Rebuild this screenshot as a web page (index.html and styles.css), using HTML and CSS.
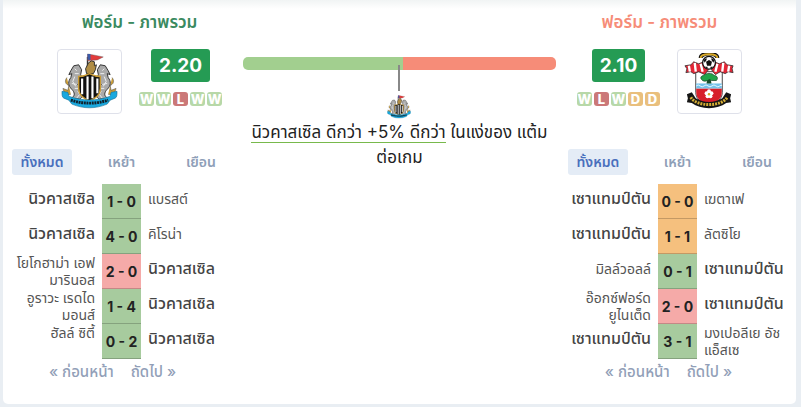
FILE: index.html
```html
<!DOCTYPE html>
<html lang="th">
<head>
<meta charset="utf-8">
<meta name="viewport" content="width=device-width, initial-scale=1">
<title>ฟอร์ม - ภาพรวม</title>
<link rel="stylesheet" href="styles.css">
</head>
<body>
<svg class="defs" aria-hidden="true">
  <symbol id="newcastle" viewBox="0 0 58 58">
    <path d="M27 4v17" stroke="#333" stroke-width="1.5"/>
    <path d="M27 1l6 1 10 2-6 3-10 1z" fill="#e23c3c" stroke="#555" stroke-width=".4"/>
    <path d="M27 1h3v6h-3z" fill="#3a5ba8"/>
    <path d="M28 10l3-2 3 1v4l2-1-1 5-2 4h-7l-1-5z" fill="#b08d45" stroke="#333"/>
    <path d="M6 25c-3 4-1 7 2 8l-1 5-5-2c1 5 4 7 8 6M52 25c3 4 1 7-2 8l1 5 5-2c-1 5-4 7-8 6" fill="#c99b35" stroke="#555" stroke-width=".6"/>
    <g id="horse" fill="#aaa" stroke="#333" stroke-width="1">
      <path d="M10 18l3-5 5-1 3 5-1 5 2 5 2 3-4-1-3 3 5 5c2 4 0 8-3 10l-9-1c5-2 4-6 1-9-4-4-4-8-1-12l1-4-3 1z"/>
      <path d="M14 16l2 2M14 24l-2 5 3 5M17 39l2 3-3 4M14 21h4M11 31l5 1M14 36l4 0" fill="none" stroke="#eee"/>
    </g>
    <use href="#horse" transform="translate(58 0) scale(-1 1)"/>
    <path d="M18 24c4 0 7-1 11-3 4 2 7 3 11 3v12c0 7-5 10-11 13-6-3-11-6-11-13z" fill="#111" stroke="#c99b35" stroke-width="1.5"/>
    <path d="M21.500 26v16M27 24v23M32 24v22M37 26v15" stroke="#fff" stroke-width="2.200"/>
    <path d="M1 39l6 1 1 4c13 5 29 5 42 0l1-4 6-1c0 4 0 6-2 7l-5 2-3 4c-12 5-24 5-36 0l-3-4-5-2c-2-1-2-3-2-7z" fill="#19a9df" stroke="#146d91" stroke-width=".6"/>
    <path d="M10 48c13 4 25 4 38 0" fill="none" stroke="#10222c" stroke-width="3" stroke-dasharray="2 .7"/>
  </symbol>
  <symbol id="southampton" viewBox="0 0 58 58">
    <path d="M15 19h27v21c0 7-5 10-13.500 14-8.500-4-13.500-7-13.500-14z" fill="#fff" stroke="#444" stroke-width="1"/>
    <path d="M15.500 36h26v4c0 7-5 10-13 14-8-4-13-7-13-14z" fill="#d71f2a"/>
    <path d="M15.500 31h26v5h-26z" fill="#74c2ea"/>
    <path d="M15.500 33.500q2-2 4 0t4 0 4 0 4 0 4 0 4 0 2 0" fill="none" stroke="#e9f7ff"/>
    <path d="M23 9l-5 2-5-2-3 3-6 1 2 3-1 4 5-1 3 2 5-2 6 3 4-5z" fill="#e32636" stroke="#333" stroke-width=".8"/>
    <path d="M53 13l-6-1-3-3-5 2-5-2-3 8 4 5 5-3 5 2 3-2 5 1-1-4z" fill="#e32636" stroke="#333" stroke-width=".8"/>
    <path d="M8 13l1 6M14 10l1 9M20 11l2 8M49 13l-1 6M43 10l-1 9M37 11l-2 8" stroke="#fff" stroke-width="2.400"/>
    <path d="M20 5c0-6 17-6 17 0" fill="none" stroke="#111" stroke-width="4"/>
    <path d="M20 5c0-5 17-5 17 0" fill="none" stroke="#d9aa28" stroke-width="2"/>
    <circle cx="28.500" cy="10" r="6.500" fill="#fff" stroke="#111" stroke-width="1.300"/>
    <path d="M28.500 7l3 2-1 4h-4l-1-4zM23 7l3-2v2l-2 3zM34 7l-3-2v2l2 3zM24 14l3 0v2zM33 14l-3 0v2z" fill="#111"/>
    <path d="M27 26h3l1 5h-5z" fill="#174d2b"/>
    <path d="M21 27c-2-2 0-4 2-4 2-3 9-3 11 0 3 0 4 3 2 5h-5l-2-1-2 1c-2 1-5 1-6-1z" fill="#20a348" stroke="#123d20" stroke-width=".7"/>
    <path d="M6 42l5-2 4 6c8 5 19 5 27 0l4-6 5 2-1 4 1 4-5 1c-9 7-26 7-35 0l-5-1 1-4z" fill="#151515"/>
    <path d="M10 45c5 10 32 10 37 0" fill="none" stroke="#d4ad34" stroke-width="3" stroke-dasharray="2 1"/>
    <g fill="#fff"><circle cx="28.500" cy="39" r="2"/><circle cx="31" cy="41" r="2"/><circle cx="30" cy="44" r="2"/><circle cx="27" cy="44" r="2"/><circle cx="26" cy="41" r="2"/></g>
    <circle cx="28.500" cy="42" r="1.200" fill="#d9aa28"/>
  </symbol>
</svg>
<main class="card">
  <section class="team">
    <header class="summary">
      <h2 class="title">ฟอร์ม - ภาพรวม</h2>
      <div class="overview">
        <div class="logo"><svg role="img" aria-label="นิวคาสเซิล"><use href="#newcastle"/></svg></div>
        <div class="rating">
          <strong class="points">2.20</strong>
          <div class="form"><span class="chip win">W</span><span class="chip win">W</span><span class="chip loss">L</span><span class="chip win">W</span><span class="chip win">W</span></div>
        </div>
      </div>
    </header>
    <nav class="tabs"><button class="tab active">ทั้งหมด</button><button class="tab">เหย้า</button><button class="tab">เยือน</button></nav>
    <table class="matches">
      <tr><td class="home own">นิวคาสเซิล</td><td class="score green">1 - 0</td><td class="away">แบรสต์</td></tr>
      <tr><td class="home own">นิวคาสเซิล</td><td class="score green">4 - 0</td><td class="away">คิโรน่า</td></tr>
      <tr><td class="home double">โยโกฮาม่า เอฟ<br>มารินอส</td><td class="score red">2 - 0</td><td class="away own">นิวคาสเซิล</td></tr>
      <tr><td class="home double">อูราวะ เรดได<br>มอนส์</td><td class="score green">1 - 4</td><td class="away own">นิวคาสเซิล</td></tr>
      <tr><td class="home double">ฮัลล์ ซิตี้</td><td class="score green">0 - 2</td><td class="away own">นิวคาสเซิล</td></tr>
    </table>
    <div class="pager"><button>« ก่อนหน้า</button><button>ถัดไป »</button></div>
  </section>

  <section class="compare">
    <div class="bar"><span class="bar-home"></span><span class="bar-away"></span></div>
    <div class="marker"></div>
    <svg class="mini" role="img" aria-label="นิวคาสเซิล"><use href="#newcastle"/></svg>
    <p class="verdict"><span class="lead">นิวคาสเซิล ดีกว่า +5% ดีกว่า</span> ในแง่ของ แต้ม<br>ต่อเกม</p>
  </section>

  <section class="team visitor">
    <header class="summary">
      <h2 class="title">ฟอร์ม - ภาพรวม</h2>
      <div class="overview">
        <div class="rating">
          <strong class="points">2.10</strong>
          <div class="form"><span class="chip win">W</span><span class="chip loss">L</span><span class="chip win">W</span><span class="chip draw">D</span><span class="chip draw">D</span></div>
        </div>
        <div class="logo"><svg role="img" aria-label="เซาแทมป์ตัน"><use href="#southampton"/></svg></div>
      </div>
    </header>
    <nav class="tabs"><button class="tab active">ทั้งหมด</button><button class="tab">เหย้า</button><button class="tab">เยือน</button></nav>
    <table class="matches">
      <tr><td class="home own">เซาแทมป์ตัน</td><td class="score orange">0 - 0</td><td class="away">เฆตาเฟ</td></tr>
      <tr><td class="home own">เซาแทมป์ตัน</td><td class="score orange">1 - 1</td><td class="away">ลัตซิโย</td></tr>
      <tr><td class="home">มิลล์วอลล์</td><td class="score green">0 - 1</td><td class="away own">เซาแทมป์ตัน</td></tr>
      <tr><td class="home double">อ๊อกซ์ฟอร์ด<br>ยูไนเต็ด</td><td class="score red">2 - 0</td><td class="away own">เซาแทมป์ตัน</td></tr>
      <tr><td class="home own">เซาแทมป์ตัน</td><td class="score green">3 - 1</td><td class="away double">มงเปอลีเย อัช<br>แอ็สเซ</td></tr>
    </table>
    <div class="pager"><button>« ก่อนหน้า</button><button>ถัดไป »</button></div>
  </section>
</main>
</body>
</html>
```
FILE: styles.css
```css
* { box-sizing: border-box; }
body {
  margin: 0;
  padding: 0 5px 3px 3px;
  background: #e9eef3;
  color: #222;
  font-family: Inter, "Noto Sans Thai", sans-serif;
}
.defs { position: absolute; width: 0; height: 0; }
button { border: 0; background: none; padding: 0; font: inherit; color: inherit; }
.card {
  display: grid;
  grid-template-columns: 7fr 10fr 7fr;
  column-gap: 12px;
  padding: 12px 9px 22px;
  border-radius: 0 0 5px 5px;
  background: linear-gradient(#f1f4f4, #fff 9px);
}
.summary { padding-left: 36px; }
.visitor .summary { padding: 0 36px 0 0; }
.title {
  margin: 0 0 17px;
  font-size: 17px;
  line-height: 20px;
  font-weight: 600;
  text-align: center;
  color: #3a8a60;
}
.visitor .title { color: #f68c78; }
.overview { display: flex; justify-content: center; gap: 17px; }
.logo {
  width: 65px;
  height: 65px;
  padding: 3px;
  border: 1px solid #dfe1ea;
  border-radius: 4px;
  background: #fff;
}
.logo svg { display: block; width: 57px; height: 57px; }
.rating { display: flex; flex-direction: column; align-items: center; gap: 10px; }
.points {
  padding: 0 8px;
  border-radius: 3px;
  background: #259b54;
  color: #fff;
  font-size: 19px;
  line-height: 33px;
  font-weight: 700;
}
.form { display: flex; gap: 2px; }
.chip {
  width: 15px;
  height: 14px;
  border-radius: 3px;
  color: #fff;
  font-size: 13px;
  line-height: 15px;
  font-weight: 800;
  text-align: center;
}
.win { background: #b7d8a8; }
.loss { background: #cb7878; }
.draw { background: #e9bf7d; }
.tabs { display: flex; justify-content: space-between; margin-top: 35px; }
.tab {
  width: 60px;
  height: 26px;
  border-radius: 3px;
  font-size: 14px;
  font-weight: 600;
  color: #8fa0b8;
}
.active { background: #e4ecf6; color: #4a70bd; }
.matches {
  width: 100%;
  margin-top: 9px;
  border-collapse: collapse;
  table-layout: fixed;
}
.matches td { height: 35px; padding: 0; vertical-align: middle; }
.matches .home, .matches .away {
  padding-bottom: 6px;
  font-size: 14px;
  line-height: 17px;
  color: #555;
  white-space: nowrap;
}
.matches .home { padding-right: 7px; text-align: right; }
.matches .away { padding-left: 7px; }
.matches .own { font-size: 16px; font-weight: 500; color: #444; }
.matches .double { padding-bottom: 1px; vertical-align: top; }
.matches .score {
  width: 39px;
  font-size: 14px;
  line-height: 16px;
  font-weight: 700;
  text-align: center;
  white-space: nowrap;
  box-shadow: inset 0 -1px rgba(0, 0, 0, .2);
}
.green { background: #a7cb9e; }
.red { background: #f5aaa8; }
.orange { background: #f5c07e; }
.pager {
  display: flex;
  justify-content: center;
  gap: 17px;
  padding-right: 18px;
  margin-top: 3px;
  font-size: 15px;
  line-height: 20px;
  font-weight: 500;
  color: #929fb8;
}
.compare { display: flex; flex-direction: column; align-items: center; padding-top: 45px; }
.bar { display: flex; width: 100%; height: 13px; border-radius: 5px; overflow: hidden; }
.bar-home { flex: 51; background: #a2cf8f; }
.bar-away { flex: 49; background: #f68c78; }
.marker { width: 2px; height: 26px; margin-top: -5px; background: #888; }
.mini { width: 24px; height: 26px; margin-top: 3px; }
.verdict { margin: 0; font-size: 17px; line-height: 25px; text-align: center; white-space: nowrap; }
.lead { border-bottom: 1px solid #78b94c; }
```
